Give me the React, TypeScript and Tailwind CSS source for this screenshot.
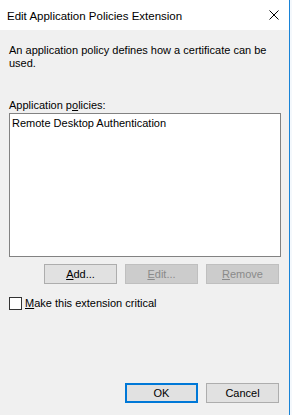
import React from "react";

const font = { fontFamily: '"Liberation Sans", Arial, sans-serif' };

function Btn({
  children,
  disabled,
  primary,
}: {
  children: React.ReactNode;
  disabled?: boolean;
  primary?: boolean;
}) {
  const base =
    "w-[73px] h-[20px] flex items-center justify-center text-[11px] leading-[13px]";
  if (disabled)
    return (
      <div className={`${base} bg-[#cccccc] border border-[#bfbfbf] text-[#8a8a8a]`}>
        {children}
      </div>
    );
  if (primary)
    return (
      <div className={`${base} bg-[#e1e1e1] border-2 border-[#0078d7] text-black`}>
        {children}
      </div>
    );
  return (
    <div className={`${base} bg-[#e1e1e1] border border-[#adadad] text-black`}>
      {children}
    </div>
  );
}

export default function App() {
  return (
    <div className="w-[292px] h-[415px] flex bg-white" style={font}>
      <div className="w-[289px] h-full flex flex-col">
        <div className="h-[30px] bg-white flex items-start justify-between pl-[7px] pr-[10px] pt-[9px]">
          <span className="text-[11.5px] leading-[14px] text-black">
            Edit Application Policies Extension
          </span>
          <svg width="10" height="10" viewBox="0 0 10 10" className="mt-[1px]">
            <path d="M0.5 0.5 L9.5 9.5 M9.5 0.5 L0.5 9.5" stroke="#000" strokeWidth="1" />
          </svg>
        </div>
        <div className="flex-1 bg-[#f0f0f0] flex flex-col pl-[9px] pr-[8px] pt-[14px] pb-[12px] text-black">
          <p className="text-[11px] leading-[13px]">
            An application policy defines how a certificate can be used.
          </p>
          <div className="mt-[29px] text-[11px] leading-[13px]">
            Application p<span className="underline">o</span>licies:
          </div>
          <div className="mt-[1px] h-[144px] border border-[#828282] bg-white pt-[3px] pl-[2px]">
            <div className="text-[11px] leading-[13px]">Remote Desktop Authentication</div>
          </div>
          <div className="mt-[7px] flex justify-end gap-[8px] pr-[2px]">
            <Btn>
              <span className="underline">A</span>dd...
            </Btn>
            <Btn disabled>
              <span className="underline">E</span>dit...
            </Btn>
            <Btn disabled>
              <span className="underline">R</span>emove
            </Btn>
          </div>
          <div className="mt-[13px] flex items-center gap-[3px]">
            <div className="w-[13px] h-[13px] border border-[#333333] bg-white" />
            <span className="text-[11px] leading-[13px]">
              <span className="underline">M</span>ake this extension critical
            </span>
          </div>
          <div className="mt-auto flex justify-end gap-[8px] pr-[2px]">
            <Btn primary>OK</Btn>
            <Btn>Cancel</Btn>
          </div>
        </div>
      </div>
      <div className="w-[1px] h-full bg-[#1883d7]" />
      <div className="w-[2px] h-full bg-[#f4f8fc]" />
    </div>
  );
}
